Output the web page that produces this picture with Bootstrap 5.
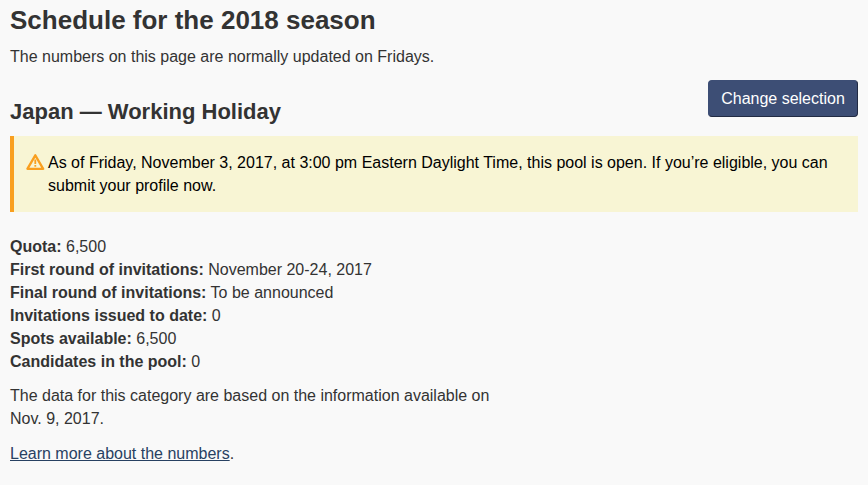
<!DOCTYPE html>
<html lang="en">
<head>
<meta charset="utf-8">
<title>Schedule for the 2018 season</title>
<link href="https://cdn.jsdelivr.net/npm/bootstrap@5.3.0/dist/css/bootstrap.min.css" rel="stylesheet">
<style>
body{background:#f9f9f9;color:#333;font:16px/23px "Liberation Sans",Arial,sans-serif}
main{padding:6px 10px 0}
h1{font-size:26px;line-height:28px;font-weight:700}
h2{font-size:22px;line-height:24px;font-weight:700}
.intro{margin:11px 0 12px}
.btn-change,.btn-change:hover{background:#3d4e75;border:1px solid;border-color:#3d4e75 #222b43 #222b43 #3d4e75;color:#fff;border-radius:4px;line-height:23px;padding:6px 11px;width:150px;height:37px}
.notice{background:#f8f5d4;border-left:4px solid #f99f1f;color:#000;height:76px;padding:15px 10px 0 34px;margin-top:12px}
.notice svg{position:absolute;left:11px;top:17px}
.facts{margin:23px 0 11px}
.basis{margin-bottom:12px}
.more{color:#284162}
</style>
</head>
<body>
<main>
<h1 class="mb-0">Schedule for the 2018 season</h1>
<p class="intro">The numbers on this page are normally updated on Fridays.</p>
<div class="d-flex justify-content-between align-items-start">
<h2 class="mb-0 mt-3 pt-1">Japan — Working Holiday</h2>
<button class="btn btn-change" type="button">Change selection</button>
</div>
<div class="notice position-relative">
<svg width="20" height="18" viewBox="0 0 20 18" aria-hidden="true"><path d="M10.3 2.3 18.2 15.8H2.4Z" fill="none" stroke="#f99f1f" stroke-width="2.3" stroke-linejoin="round"/><path d="M10.3 6.6v4.3M10.3 12v1.8" stroke="#f99f1f" stroke-width="1.8"/></svg>
<p class="mb-0">As of Friday, November 3, 2017, at 3:00 pm Eastern Daylight Time, this pool is open. If you’re eligible, you can submit your profile now.</p>
</div>
<p class="facts"><strong>Quota:</strong> 6,500<br><strong>First round of invitations:</strong> November 20-24, 2017<br><strong>Final round of invitations:</strong> To be announced<br><strong>Invitations issued to date:</strong> 0<br><strong>Spots available:</strong> 6,500<br><strong>Candidates in the pool:</strong> 0</p>
<p class="basis">The data for this category are based on the information available on<br>Nov. 9, 2017.</p>
<p class="mb-0"><a class="more" href="#">Learn more about the numbers</a>.</p>
</main>
<script src="https://cdn.jsdelivr.net/npm/bootstrap@5.3.0/dist/js/bootstrap.bundle.min.js"></script>
</body>
</html>
